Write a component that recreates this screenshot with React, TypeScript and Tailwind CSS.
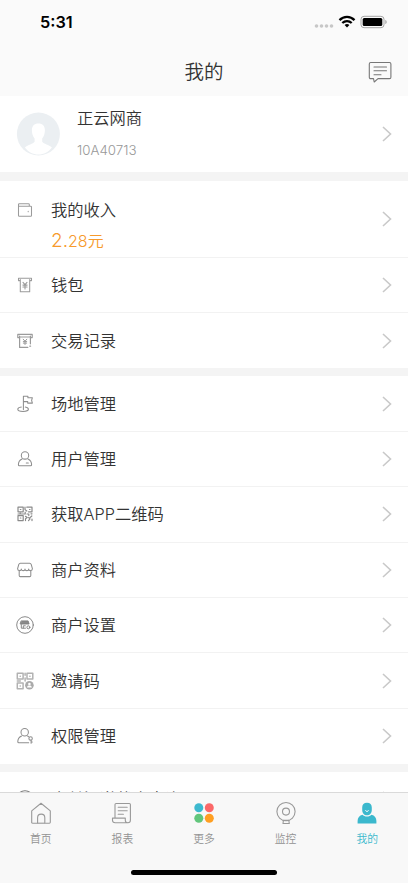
import type { ReactNode } from 'react'

const TEXT_FONT = "font-['Inter','Noto_Sans_CJK_SC',sans-serif] font-[350]"

type MenuItem = {
  label: string
  icon: ReactNode
}

type Tab = {
  label: string
  icon: ReactNode
  active?: boolean
}

function LineIcon({ children, color = '#8e8e8e', width = 1.05 }: { children: ReactNode; color?: string; width?: number }) {
  return (
    <svg className="w-[18px] h-[18px] shrink-0" viewBox="0 0 18 18" fill="none" stroke={color} strokeWidth={width} strokeLinecap="round" strokeLinejoin="round">
      {children}
    </svg>
  )
}

function Chevron() {
  return (
    <svg className="w-[10px] h-[16px] shrink-0" viewBox="0 0 10 16" fill="none" stroke="#c9c9c9" strokeWidth="1.6">
      <path d="M1 1l7.500 7L1 15" />
    </svg>
  )
}

const WALLET_ICON = (
  <LineIcon color="#9b9b9b">
    <path d="M2.500 5.200v9.200c0 .5.300.8.800.8h11.400c.5 0 .8-.3.800-.8V6c0-.5-.3-.8-.8-.8H2.500V3.600c0-.5.300-.8.800-.8h9.200c.5 0 .8.300.8.800v1.600" />
    <path d="M12.200 10.300v.4" />
  </LineIcon>
)

const MONEY_ITEMS: MenuItem[] = [
  {
    label: '钱包',
    icon: (
      <LineIcon color="#9b9b9b">
        <path d="M4.300 4.600H2.500V2.200h13v2.400h-1.800M4.300 3.600v12.100h9.400V3.600" />
        <path d="m7 6.300 2 2.400 2-2.400M6.900 9.100h4.200M6.900 11h4.200M9 8.900v4.100" />
      </LineIcon>
    ),
  },
  {
    label: '交易记录',
    icon: (
      <LineIcon color="#9b9b9b" width={1.2}>
        <path d="M3.600 5.600H1.800V2.400h14.400v3.200h-1.800M3.600 4.200v11.200h8.200M14.400 4.200v7.600M3.600 5h10.800M13.800 14.200h.8" />
        <path d="m7.200 7.200 1.800 2 1.800-2M7.300 9.600h3.400M7.300 11.100h3.400M9 9.200v3.300" strokeWidth="1" />
      </LineIcon>
    ),
  },
]

const MANAGE_ITEMS: MenuItem[] = [
  {
    label: '场地管理',
    icon: (
      <LineIcon>
        <path d="M7.400 14.600V1.200h4.500v1.500h4.500l-.8 2.700.8 2.700h-4.700V6.600H7.400" />
        <path d="M5.300 12.100c-2 .3-3.500 1.100-3.500 2.100 0 1.200 2.400 2.200 5.300 2.200s5.300-1 5.300-2.200c0-1-1.400-1.800-3.100-2.100" />
      </LineIcon>
    ),
  },
  {
    label: '用户管理',
    icon: (
      <LineIcon>
        <circle cx="9" cy="5.400" r="3.700" />
        <path d="M6 9.100c-2.200 1-3.600 3.100-3.600 5.700 0 .7.300 1 1 1h11.200c.7 0 1-.3 1-1 0-2.600-1.400-4.700-3.600-5.700M10.300 13h2" />
      </LineIcon>
    ),
  },
  {
    label: '获取APP二维码',
    icon: (
      <LineIcon color="#8a8a8a" width={1.2}>
        <path d="M2 2.200h5.200v4.600H2zM2 10.600h5.200v5H2zM10.800 2.200H16v4.600h-3.500M4.300 4.500h.6M4.300 13h.6M13.500 4.500h.5M9 2.200v2.400L10.800 6M9.200 7v2H2M4.200 9V8M11 9h1.800v1.500M15 8.800h1M9.500 11.300l1.700 1.300-1.700 1.200v1.800M12.500 15.600l1.500-1.700-1.300-1.400M15.800 11l-1.500 1.400M16 14.200v1.400" />
      </LineIcon>
    ),
  },
  {
    label: '商户资料',
    icon: (
      <LineIcon>
        <path d="M4.400 2.200h9.200c.9 0 1.300.4 1.600 1.200l1.200 4.300c0 1.200-.8 1.900-1.900 1.900-1 0-1.800-.7-1.800-1.700 0 1-.8 1.700-1.800 1.700S9 8.900 9 7.900c0 1-.8 1.700-1.800 1.700S5.300 8.900 5.300 7.900c0 1-.8 1.700-1.800 1.700S1.600 8.900 1.600 7.700l1.200-4.300c.3-.8.7-1.200 1.600-1.200zM3.200 9.800v4.700c0 .7.400 1.100 1.100 1.100h9.400c.7 0 1.100-.4 1.100-1.100V9.800" />
      </LineIcon>
    ),
  },
  {
    label: '商户设置',
    icon: (
      <LineIcon color="#7d7d7d" width={0.9}>
        <circle cx="9" cy="9" r="8.300" />
        <path d="M5.500 4.900h6.600l1 3.100H4.500z" fill="#8a8a8a" />
        <path d="M5.300 8.600v3.600h4.200M7.300 12V9.800h2" />
        <circle cx="12.400" cy="11.300" r="1.500" />
      </LineIcon>
    ),
  },
  {
    label: '邀请码',
    icon: (
      <LineIcon color="#b2b2b2" width={1.5}>
        <path d="M1.300 1.300h5.800v5.800H1.300zM11 1.300h5.800v5.800H11zM1.300 11h5.800v5.800H1.300zM4.100 4.200h.2M13.800 4.200h.2M4.100 13.900h.2M9.100 1.300v2M9.100 6v3M1.300 9.100h3" />
        <circle cx="13.400" cy="13.300" r="4.300" fill="#aaaaaa" stroke="none" />
        <circle cx="13.400" cy="12" r="1.300" fill="#fff" stroke="none" />
        <path d="M10.900 15.600c.1-1.500 1.100-2.100 2.500-2.100s2.400.6 2.500 2.100z" fill="#fff" stroke="none" />
      </LineIcon>
    ),
  },
  {
    label: '权限管理',
    icon: (
      <LineIcon>
        <circle cx="8.700" cy="5.200" r="3.700" />
        <path d="M5.500 9.100c-2.200 1-3.700 3.100-3.700 5.700 0 .7.300 1 1 1h9.900M11.500 9c.5.200.9.400 1.200.8" />
        <circle cx="14.600" cy="11.400" r="1.700" />
        <path d="M15.100 13.200v3M15.100 15h1.200" />
      </LineIcon>
    ),
  },
]

const CHANNEL_ITEM: MenuItem = {
  label: '支付渠道状态查询',
  icon: (
    <LineIcon color="#777">
      <circle cx="9" cy="9" r="8.300" />
    </LineIcon>
  ),
}

const TABS: Tab[] = [
  {
    label: '首页',
    icon: (
      <g fill="none" stroke="#999" strokeWidth="1.1" strokeLinejoin="round">
        <path d="M2.700 22.200V9.900L12 2.300l9.300 7.600v11.400c0 .6-.3.900-.9.900h-4.600v-5.500c0-2.200-1.500-3.600-3.600-3.600s-3.600 1.400-3.600 3.600v5.500H3.600c-.6 0-.9-.3-.9-.9" />
        <path d="M8.600 22.200h7.200" />
      </g>
    ),
  },
  {
    label: '报表',
    icon: (
      <g fill="none" stroke="#999" strokeWidth="1.1" strokeLinejoin="round" strokeLinecap="round">
        <path d="M5 16.700V3.600c0-.7.400-1.100 1.100-1.100h13.200c.7 0 1.100.4 1.100 1.100v15.600c0 1.600-.9 2.500-2.400 2.500H5.200c-1.700 0-2.700-1-2.700-2.500v-2.100h12.800v2.100c0 1.500 1 2.500 2.500 2.500" />
        <path d="M8.200 6.200h9M8.200 9.700h9M8.200 13.200h5.200" />
      </g>
    ),
  },
  {
    label: '更多',
    icon: (
      <>
        <circle cx="6.800" cy="6.800" r="4.500" fill="#3db9cf" />
        <circle cx="17.300" cy="6.800" r="4.500" fill="#fb6868" />
        <circle cx="6.800" cy="17.200" r="4.500" fill="#62c67c" />
        <circle cx="17.300" cy="17.200" r="4.500" fill="#ff9f22" />
      </>
    ),
  },
  {
    label: '监控',
    icon: (
      <g fill="none" stroke="#999" strokeWidth="1.1" strokeLinejoin="round">
        <circle cx="12" cy="10.600" r="9.100" />
        <circle cx="12" cy="10.600" r="3.500" />
        <path d="M9.400 19.400 9 22.500h6.300l-.5-3.100z" />
      </g>
    ),
  },
  {
    label: '我的',
    active: true,
    icon: (
      <>
        <path d="M12 1.700c-3.100 0-4.800 1.900-4.800 4.800v2.200c0 3.200 1.900 5.600 4.800 5.600s4.800-2.400 4.800-5.600V6.500c0-2.900-1.700-4.800-4.800-4.800z" fill="#3bb8cd" />
        <path d="M7.500 13.800c-3.100.8-4.900 3-4.900 6.200v2.600h18.800V20c0-3.200-1.800-5.400-4.900-6.200-1.100 1.200-2.600 1.800-4.500 1.800s-3.400-.6-4.500-1.800z" fill="#3bb8cd" />
        <path d="M10.300 9.300c.4.800.9 1.100 1.700 1.100s1.300-.3 1.700-1.100" fill="none" stroke="#fff" strokeWidth=".9" />
      </>
    ),
  },
]

function MenuRow({ item, height, divider }: { item: MenuItem; height: string; divider: boolean }) {
  return (
    <div className={`${height} shrink-0 flex items-center px-4 ${divider ? 'border-b border-[#f2f2f2]' : ''}`}>
      {item.icon}
      <span className="ml-[17px] flex-1 text-[16.3px] leading-6">{item.label}</span>
      <Chevron />
    </div>
  )
}

function Header() {
  return (
    <header className="h-24 shrink-0 bg-[#fafafa]">
      <div className="h-12 flex items-start justify-between pl-10 pr-[21px]">
        <span className="mt-[12px] text-[16.3px] leading-5 font-semibold text-black">5:31</span>
        <div className="mt-[15px] flex items-start">
          <svg className="w-5 h-[14px]" viewBox="0 0 20 14" fill="#c7c7c7">
            <circle cx="2.500" cy="11" r="1.800" />
            <circle cx="7.500" cy="11" r="1.800" />
            <circle cx="12.500" cy="11" r="1.800" />
            <circle cx="17.500" cy="11" r="1.800" />
          </svg>
          <svg className="ml-[4px] w-[18px] h-[13px]" viewBox="0 0 18 13" fill="none" stroke="#000" strokeWidth="2.3">
            <path d="M1.500 5.100C5.700.8 12.300.8 16.500 5.100" />
            <path d="M4.300 8c2.700-2.600 6.700-2.600 9.400 0" />
            <path d="M9 12.500 6.600 10c1.400-1.200 3.400-1.200 4.800 0z" fill="#000" stroke="none" />
          </svg>
          <svg className="ml-[4px] w-[27px] h-[14px]" viewBox="0 0 27 14">
            <rect x="1" y="1.300" width="23" height="11.400" rx="3" fill="none" stroke="#a5a5a5" />
            <rect x="2.700" y="3" width="19.600" height="8" rx="1.500" fill="#000" />
            <path d="M25.300 4.900v4.200c1-.4 1.400-1.100 1.400-2.100s-.4-1.700-1.400-2.100z" fill="#a5a5a5" />
          </svg>
        </div>
      </div>
      <div className="h-12 flex items-center pl-10 pr-4">
        <h1 className="flex-1 text-center text-[19.5px] leading-7">我的</h1>
        <svg className="w-6 h-6" viewBox="0 0 24 24" fill="none" stroke="#777" strokeWidth="1.1" strokeLinejoin="round" strokeLinecap="round">
          <path d="M2.700 2.500h18.800c.9 0 1.400.5 1.400 1.400v13.300c0 .9-.5 1.400-1.400 1.400H10L6.200 22l-.7-3.400H2.700c-.9 0-1.400-.5-1.400-1.400V3.900c0-.9.500-1.400 1.400-1.400z" />
          <path d="M6 7h12.500M6 10.800h12.500M6 14.700h7" />
        </svg>
      </div>
    </header>
  )
}

export default function App() {
  return (
    <div className={`${TEXT_FONT} w-full h-[883px] overflow-hidden flex flex-col bg-white text-[#333]`}>
      <Header />

      <main className="flex-1 min-h-0 overflow-hidden flex flex-col">
        {/* 个人信息 */}
        <section className="h-[76px] shrink-0 flex items-center px-4">
          <svg className="w-11 h-11" viewBox="0 0 44 44">
            <circle cx="22.400" cy="22" r="21.500" fill="#ebeff2" />
            <path d="M22.400 11.500c-4.200 0-6.500 2.700-6.500 6.700 0 3.200.9 6.300 2.700 8.300v3.200c-1.500 2.400-6.700 2.700-9.700 5.800 3.300 4.400 8.100 7.100 13.500 7.100s10.200-2.700 13.500-7.100c-3-3.100-8.200-3.400-9.700-5.800v-3.200c1.800-2 2.700-5.100 2.700-8.300 0-4-2.300-6.700-6.500-6.700z" fill="#fff" />
          </svg>
          <div className="ml-[17px] flex-1 self-start mt-[10px]">
            <div className="text-[16.3px] leading-6">正云网商</div>
            <div className="mt-[12px] text-[13.3px] leading-4 text-[#999]">10A40713</div>
          </div>
          <Chevron />
        </section>

        <div className="h-[9px] shrink-0 bg-[#f4f4f4]" />

        {/* 收入与钱包 */}
        <section className="h-[77px] shrink-0 flex items-center px-4 border-b border-[#f2f2f2]">
          <div className="self-start mt-[20px]">{WALLET_ICON}</div>
          <div className="self-start mt-[17px] ml-[17px] flex-1">
            <div className="text-[16.3px] leading-6">我的收入</div>
            <div className="mt-[7px] leading-6 text-[#f79a2c]">
              <span className="text-[19px]">2.</span>
              <span className="text-[16px]">28元</span>
            </div>
          </div>
          <Chevron />
        </section>
        {MONEY_ITEMS.map((item, i) => (
          <MenuRow key={item.label} item={item} height="h-[55px]" divider={i < MONEY_ITEMS.length - 1} />
        ))}

        <div className="h-[8.4px] shrink-0 bg-[#f4f4f4]" />

        {/* 管理功能 */}
        {MANAGE_ITEMS.map((item, i) => (
          <MenuRow key={item.label} item={item} height="h-[55.4px]" divider={i < MANAGE_ITEMS.length - 1} />
        ))}

        <div className="h-2 shrink-0 bg-[#f4f4f4]" />
        <MenuRow item={CHANNEL_ITEM} height="h-[53px]" divider={false} />
      </main>

      {/* 底部导航 */}
      <nav className="h-[91px] shrink-0 border-t border-[#dadada] bg-[#f8f8f8] flex flex-col">
        <div className="h-[57px] grid grid-cols-5">
          {TABS.map(tab => (
            <div key={tab.label} className="flex flex-col items-center pt-2">
              <svg className="w-6 h-6" viewBox="0 0 24 24">{tab.icon}</svg>
              <span className={`mt-[6.5px] text-[10.8px] leading-4 ${tab.active ? 'text-[#3bb8cd]' : 'text-[#929292]'}`}>{tab.label}</span>
            </div>
          ))}
        </div>
        <div className="mt-5 mx-auto w-[146px] h-[5px] rounded-full bg-black" />
      </nav>
    </div>
  )
}
